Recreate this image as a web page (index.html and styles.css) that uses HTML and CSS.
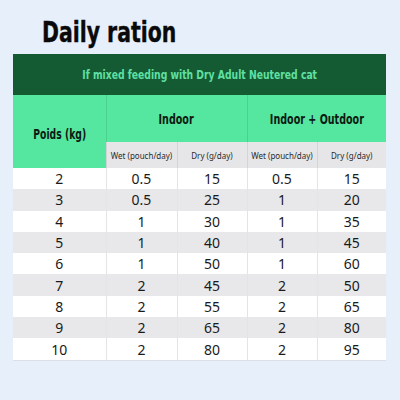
FILE: index.html
```html
<!DOCTYPE html>
<html>
<head>
<meta charset="utf-8">
<link rel="stylesheet" href="styles.css">
</head>
<body>
<h1 class="title"><span class="narrow">Daily ration</span></h1>
<table class="ration">
  <colgroup>
    <col class="c-kg"><col class="c-w1"><col class="c-d1"><col class="c-w2"><col class="c-d2">
  </colgroup>
  <thead>
    <tr class="top"><th colspan="5"><span class="narrow">If mixed feeding with Dry Adult Neutered cat</span></th></tr>
    <tr class="grp">
      <th rowspan="2" class="kg"><span class="narrow">Poids (kg)</span></th>
      <th colspan="2"><span class="narrow">Indoor</span></th>
      <th colspan="2"><span class="narrow">Indoor + Outdoor</span></th>
    </tr>
    <tr class="sub">
      <th>Wet (pouch/day)</th><th>Dry (g/day)</th><th>Wet (pouch/day)</th><th>Dry (g/day)</th>
    </tr>
  </thead>
  <tbody>
    <tr><td>2</td><td>0.5</td><td>15</td><td>0.5</td><td>15</td></tr>
    <tr><td>3</td><td>0.5</td><td>25</td><td>1</td><td>20</td></tr>
    <tr><td>4</td><td>1</td><td>30</td><td>1</td><td>35</td></tr>
    <tr><td>5</td><td>1</td><td>40</td><td>1</td><td>45</td></tr>
    <tr><td>6</td><td>1</td><td>50</td><td>1</td><td>60</td></tr>
    <tr><td>7</td><td>2</td><td>45</td><td>2</td><td>50</td></tr>
    <tr><td>8</td><td>2</td><td>55</td><td>2</td><td>65</td></tr>
    <tr><td>9</td><td>2</td><td>65</td><td>2</td><td>80</td></tr>
    <tr><td>10</td><td>2</td><td>80</td><td>2</td><td>95</td></tr>
  </tbody>
</table>
</body>
</html>
```
FILE: styles.css
```css
html, body {
  margin: 0;
  padding: 0;
  background: #e7effb;
  font-family: "Noto Sans", "Open Sans", sans-serif;
}
body {
  width: 400px;
  height: 400px;
  overflow: hidden;
}
.narrow {
  display: inline-block;
  white-space: nowrap;
  transform: scaleX(0.76);
  transform-origin: center;
}
.title {
  margin: 0;
  padding: 15px 0 0 42px;
  height: 45px;
  box-sizing: border-box;
  font-family: "DejaVu Sans Condensed", sans-serif;
  font-size: 28px;
  line-height: 36px;
  font-weight: 700;
  color: #0a0a0a;
  -webkit-text-stroke: 0.4px #0a0a0a;
}
.title .narrow {
  transform: scaleX(0.81);
  transform-origin: left center;
}
.ration {
  margin: 9px 0 0 13px;
  width: 373px;
  border-collapse: collapse;
  table-layout: fixed;
  background: #fff;
}
.c-kg { width: 93px; }
.c-w1 { width: 71px; }
.c-d1 { width: 70px; }
.c-w2 { width: 70px; }
.c-d2 { width: 69px; }
.ration th, .ration td {
  padding: 0;
  text-align: center;
  vertical-align: middle;
}
.top th {
  height: 41px;
  background: #145a33;
  color: #5fe0a2;
  font-family: "DejaVu Sans Condensed", sans-serif;
  font-size: 13px;
  font-weight: 700;
}
.top th .narrow { transform: scaleX(0.79); }
.grp th {
  height: 47px;
  background: #55e69f;
  color: #0c1a12;
  font-family: "DejaVu Sans Condensed", sans-serif;
  font-size: 14px;
  font-weight: 700;
  border-left: 1px solid #4bd08f;
}
.grp th.kg {
  border-left: none;
  font-size: 13.5px;
  padding-top: 4px;
}
.sub th {
  height: 26px;
  background: #e6e6e8;
  color: #2a2a2a;
  font-size: 8px;
  font-weight: 400;
  border-left: 1px solid #d4d4d6;
}
.ration td {
  height: 21.3px;
  font-size: 14px;
  color: #1a1a1a;
  border-left: 1px solid #e4e4e6;
}
.ration td:first-child { border-left: none; }
tbody tr:nth-child(even) td { background: #e8e8ea; }
tbody tr:nth-child(odd) td { background: #ffffff; }
tbody tr:last-child td { border-bottom: 1px solid #dcdfe4; }
```
